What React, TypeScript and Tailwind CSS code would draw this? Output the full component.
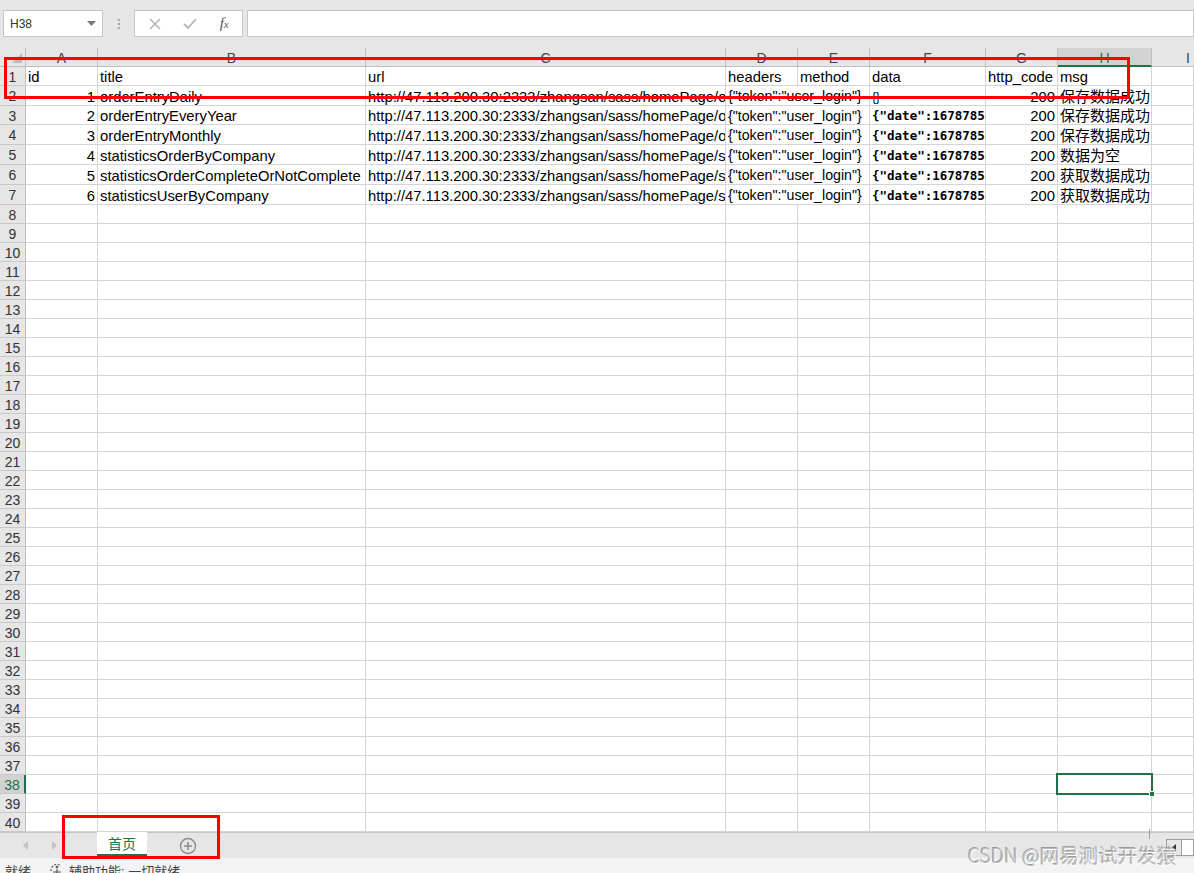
import React from 'react';

const font = "font-['Liberation_Sans','Noto_Sans_CJK_SC',sans-serif]";

const colW = [72, 268, 360, 72, 72, 116, 72, 94];
const letters = ['A', 'B', 'C', 'D', 'E', 'F', 'G', 'H'];

const tok = '{"token":"user_login"}';
const base = 'http://47.113.200.30:2333/zhangsan/sass/homePage/';

const records = [
  { id: '1', title: 'orderEntryDaily', url: base + 'orderEntryDaily', data: '{}', mono: false, msg: '保存数据成功' },
  { id: '2', title: 'orderEntryEveryYear', url: base + 'orderEntryEveryYear', data: '{"date":1678785000}', mono: true, msg: '保存数据成功' },
  { id: '3', title: 'orderEntryMonthly', url: base + 'orderEntryMonthly', data: '{"date":1678785000}', mono: true, msg: '保存数据成功' },
  { id: '4', title: 'statisticsOrderByCompany', url: base + 'statisticsOrderByCompany', data: '{"date":1678785000}', mono: true, msg: '数据为空' },
  { id: '5', title: 'statisticsOrderCompleteOrNotComplete', url: base + 'statisticsOrderCompleteOrNotComplete', data: '{"date":1678785000}', mono: true, msg: '获取数据成功' },
  { id: '6', title: 'statisticsUserByCompany', url: base + 'statisticsUserByCompany', data: '{"date":1678785000}', mono: true, msg: '获取数据成功' },
];

const dataHeights = [20, 19, 20, 20, 20, 20];

function Cell({ w, children, right, className = '' }: { w?: number; children?: React.ReactNode; right?: boolean; className?: string }) {
  return (
    <div
      className={`shrink-0 h-full border-r border-b border-[#d4d4d4] overflow-hidden whitespace-nowrap flex items-center pt-[3px] px-[2px] ${right ? 'justify-end' : ''} ${className}`}
      style={w ? { width: w } : undefined}
    >
      {children}
    </div>
  );
}

function RowHead({ n, selected }: { n: number; selected?: boolean }) {
  return (
    <div
      className={`w-[26px] shrink-0 h-full border-b border-[#c8c8c8] flex items-center justify-center pt-[2px] text-[14px] ${
        selected ? 'bg-[#d2d2d2] text-[#217346] border-r-2 border-r-[#217346]' : 'bg-[#e6e6e6] text-[#333] border-r border-r-[#bfbfbf]'
      }`}
    >
      {n}
    </div>
  );
}

function TopBar() {
  return (
    <div className="h-[48px] flex items-start pt-[10px]">
      <div className="ml-[3px] w-[100px] h-[27px] bg-white border border-[#c6c6c6] flex items-center justify-between pl-[6px] pr-[6px]">
        <span className="text-[12px] text-[#333]">H38</span>
        <svg width="9" height="5" viewBox="0 0 9 5">
          <path d="M0 0 L9 0 L4.5 5 Z" fill="#7a7a7a" />
        </svg>
      </div>
      <div className="w-[31px] h-[27px] flex flex-col items-center justify-center gap-[2px]">
        <span className="w-[2px] h-[2px] bg-[#a8a8a8]" />
        <span className="w-[2px] h-[2px] bg-[#a8a8a8]" />
        <span className="w-[2px] h-[2px] bg-[#a8a8a8]" />
      </div>
      <div className="w-[109px] h-[27px] bg-white border border-[#c6c6c6] flex items-center">
        <div className="w-[38px] flex justify-center pl-[3px]">
          <svg width="12" height="12" viewBox="0 0 12 12">
            <path d="M1 1 L11 11 M11 1 L1 11" stroke="#b4b4b4" strokeWidth="1.5" />
          </svg>
        </div>
        <div className="w-[34px] flex justify-center">
          <svg width="14" height="11" viewBox="0 0 14 11">
            <path d="M1 6 L5 10 L13 1" stroke="#b4b4b4" strokeWidth="1.8" fill="none" />
          </svg>
        </div>
        <div className="w-[36px] flex justify-center">
          <span className="font-['Liberation_Serif',serif] italic text-[#555] text-[15px] leading-none">
            f<span className="text-[11px]">x</span>
          </span>
        </div>
      </div>
      <div className="ml-[4px] flex-1 h-[27px] bg-white border border-[#c6c6c6]" />
    </div>
  );
}

function ColumnHeader() {
  return (
    <div className="h-[19px] flex">
      <div className="w-[26px] shrink-0 h-full bg-[#e6e6e6] border-r border-b border-[#bfbfbf] flex items-end justify-end pr-[3px] pb-[3px]">
        <svg width="10" height="10" viewBox="0 0 10 10">
          <path d="M10 0 L10 10 L0 10 Z" fill="#bdbdbd" />
        </svg>
      </div>
      {letters.map((l, i) =>
        l === 'H' ? (
          <div
            key={l}
            className="shrink-0 h-full bg-[#d2d2d2] border-r border-[#bfbfbf] border-b-2 border-b-[#217346] flex items-center justify-center pt-[3px] text-[14px] text-[#217346]"
            style={{ width: colW[i] }}
          >
            {l}
          </div>
        ) : (
          <div
            key={l}
            className="shrink-0 h-full bg-[#e6e6e6] border-r border-b border-[#bfbfbf] flex items-center justify-center pt-[3px] text-[14px] text-[#444]"
            style={{ width: colW[i] }}
          >
            {l}
          </div>
        )
      )}
      <div className="flex-1 h-full bg-[#e6e6e6] border-b border-[#bfbfbf] flex items-center pl-[34px] pt-[3px] text-[14px] text-[#444]">
        I
      </div>
    </div>
  );
}

function EmptyRow({ n }: { n: number }) {
  const selected = n === 38;
  return (
    <div className="h-[19px] flex">
      <RowHead n={n} selected={selected} />
      {colW.map((w, i) => (
        <Cell key={i} w={w} className={i === 7 && selected ? 'relative overflow-visible' : ''}>
          {i === 7 && selected && (
            <div className="absolute left-[-2px] top-[-2px] w-[97px] h-[22px] border-2 border-[#217346] z-10">
              <div className="absolute right-[-4px] bottom-[-4px] w-[6px] h-[6px] bg-[#217346] border border-white" />
            </div>
          )}
        </Cell>
      ))}
      <Cell className="flex-1" />
    </div>
  );
}

function Grid() {
  return (
    <div className="bg-white text-[14.8px] text-black">
      <ColumnHeader />
      <div className="h-[19px] flex">
        <RowHead n={1} />
        <Cell w={72}>id</Cell>
        <Cell w={268}>title</Cell>
        <Cell w={360}>url</Cell>
        <Cell w={72}>headers</Cell>
        <Cell w={72}>method</Cell>
        <Cell w={116}>data</Cell>
        <Cell w={72}>http_code</Cell>
        <Cell w={94}>msg</Cell>
        <Cell className="flex-1" />
      </div>
      {records.map((r, i) => (
        <div key={r.id} className="flex" style={{ height: dataHeights[i] }}>
          <RowHead n={i + 2} />
          <Cell w={72} right>
            {r.id}
          </Cell>
          <Cell w={268}>{r.title}</Cell>
          <Cell w={360}>{r.url}</Cell>
          <Cell w={144}>
            <span className="text-[14.2px]">{tok}</span>
          </Cell>
          <Cell w={116}>
            {r.mono ? (
              <span className="font-['DejaVu_Sans_Mono',monospace] text-[12.5px] font-semibold">{r.data}</span>
            ) : (
              <span className="text-[12px]">{r.data}</span>
            )}
          </Cell>
          <Cell w={72} right>
            200
          </Cell>
          <Cell w={94}>
            <span className="relative -top-[2px] text-[15px] leading-[15px] font-['Noto_Sans_CJK_SC',sans-serif]">{r.msg}</span>
          </Cell>
          <Cell className="flex-1" />
        </div>
      ))}
      {Array.from({ length: 33 }, (_, i) => (
        <EmptyRow key={i} n={i + 8} />
      ))}
    </div>
  );
}

function SheetTabs() {
  return (
    <div className="h-[26px] bg-[#e6e6e6] border-t border-[#c6c6c6] flex items-stretch relative">
      <div className="w-[97px] flex items-center">
        <svg className="ml-[23px]" width="5" height="9" viewBox="0 0 5 9">
          <path d="M5 0 L0 4.5 L5 9 Z" fill="#c4c4c4" />
        </svg>
        <svg className="ml-[24px]" width="5" height="9" viewBox="0 0 5 9">
          <path d="M0 0 L5 4.5 L0 9 Z" fill="#c4c4c4" />
        </svg>
      </div>
      <div className="w-[50px] h-[24px] -mt-px bg-white border-b-2 border-[#217346] flex items-center justify-center pt-[3px] text-[14px] text-[#217346]">
        首页
      </div>
      <div className="ml-[32px] flex items-center">
        <svg width="18" height="18" viewBox="0 0 18 18">
          <circle cx="9" cy="9" r="7.5" stroke="#8a8a8a" strokeWidth="1.4" fill="none" />
          <path d="M9 5 V13 M5 9 H13" stroke="#8a8a8a" strokeWidth="1.6" />
        </svg>
      </div>
      <div className="absolute left-[1149px] top-[-4px] w-px h-[10px] bg-[#9a9a9a]" />
      <div className="absolute left-[1166px] top-[6px] w-[28px] h-[17px] border border-[#9e9e9e] bg-[#e6e6e6] flex">
        <div className="w-[14px] flex items-center justify-center">
          <svg width="4" height="7" viewBox="0 0 4 7">
            <path d="M4 0 L0 3.5 L4 7 Z" fill="#333" />
          </svg>
        </div>
        <div className="flex-1 bg-white border-l border-[#9e9e9e]" />
      </div>
    </div>
  );
}

function StatusBar() {
  return (
    <div className="h-[15px] bg-[#f3f3f3] flex items-start text-[13px] text-[#444] overflow-hidden">
      <span className="ml-[5px] mt-[6px] leading-[16px]">就绪</span>
      <svg className="ml-[18px] mt-[5px]" width="16" height="14" viewBox="0 0 16 14">
        <path d="M2 8 A6 6 0 0 1 12 3" stroke="#555" strokeWidth="1.2" fill="none" strokeDasharray="2 1.5" />
        <path d="M8 6 V13 M4 9 H12" stroke="#555" strokeWidth="1.2" />
        <circle cx="8" cy="4" r="1.3" fill="#555" />
      </svg>
      <span className="ml-[4px] mt-[6px] leading-[16px]">辅助功能: 一切就绪</span>
    </div>
  );
}

export default function App() {
  return (
    <div className={`relative w-[1194px] h-[873px] overflow-hidden bg-[#e6e6e6] ${font}`}>
      <TopBar />
      <Grid />
      <SheetTabs />
      <StatusBar />

      <div className="absolute left-[4px] top-[57px] w-[1126px] h-[42px] border-[3px] border-[#ff0000] z-20 pointer-events-none" />
      <div className="absolute left-[62px] top-[815px] w-[158px] h-[44px] border-[3px] border-[#ff0000] z-20 pointer-events-none" />

      <div className="absolute left-[968px] top-[840px] z-30 text-[19.5px] text-[#bababa] whitespace-nowrap [text-shadow:1px_1px_0_#ffffff,-1px_-1px_0_#9a9a9a] font-['Noto_Sans_CJK_SC',sans-serif] font-light">
        CSDN @网易测试开发猿
      </div>
    </div>
  );
}
